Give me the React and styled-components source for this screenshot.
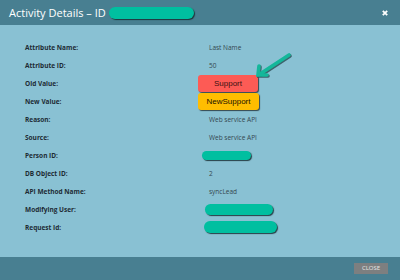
import React from "react";
import styled, { createGlobalStyle } from "styled-components";

const Global = createGlobalStyle`
  html, body {
    margin: 0;
    padding: 0;
    width: 400px;
    height: 280px;
    overflow: hidden;
    background: #89c1d3;
  }
`;

const Modal = styled.div`
  display: flex;
  flex-direction: column;
  width: 400px;
  height: 280px;
  background: #89c1d3;
  font-family: "Open Sans", "Liberation Sans", sans-serif;
`;

const Header = styled.div`
  display: flex;
  align-items: center;
  justify-content: space-between;
  height: 25px;
  padding: 0 12px 0 9px;
  background: #487f91;
  color: #ffffff;
`;

const Title = styled.div`
  display: flex;
  align-items: center;
  font-size: 11px;
`;

const Redacted = styled.span`
  display: inline-block;
  width: ${(p) => p.w}px;
  height: ${(p) => p.h}px;
  margin-left: ${(p) => p.shift || 0}px;
  border-radius: ${(p) => p.h / 2}px;
  background: #00bfa0;
  box-shadow: 1px 1px 1px rgba(20, 40, 45, 0.85);
`;

const CloseX = styled.svg`
  width: 6px;
  height: 6px;
  margin-top: 1px;
`;

const Content = styled.div`
  position: relative;
  flex: 1;
  padding: 13px 0 0 25px;
`;

const Row = styled.div`
  display: grid;
  grid-template-columns: 184px 1fr;
  align-items: center;
  height: 18px;
`;

const Label = styled.div`
  font-size: 6.5px;
  font-weight: 700;
  color: #1d2b33;
`;

const Value = styled.div`
  display: flex;
  align-items: center;
  font-size: 6.5px;
  color: #34474f;
`;

const Pill = styled.div`
  display: flex;
  align-items: center;
  justify-content: center;
  width: ${(p) => p.w}px;
  height: 17px;
  margin-left: -11px;
  border-radius: 3px;
  background: ${(p) => p.bg};
  box-shadow: 1px 1px 1px rgba(30, 40, 45, 0.8);
  font-family: "Liberation Sans", Arial, sans-serif;
  font-size: 8px;
  color: ${(p) => p.fg};
`;

const Arrow = styled.svg`
  position: absolute;
  left: 254px;
  top: 28px;
  width: 40px;
  height: 28px;
  overflow: visible;
`;

const Footer = styled.div`
  display: flex;
  align-items: center;
  justify-content: flex-end;
  height: 23px;
  padding-right: 12px;
  background: #487f91;
`;

const CloseButton = styled.button`
  width: 34px;
  height: 11px;
  padding: 0;
  border: none;
  background: #7d7f80;
  color: #e6e6e6;
  font-family: "Open Sans", "Liberation Sans", sans-serif;
  font-size: 6px;
  line-height: 11px;
`;

const rows = [
  ["Attribute Name:", "Last Name"],
  ["Attribute ID:", "50"],
  ["Old Value:", <Pill w={60} bg="#fd5b55" fg="#3a1212">Support</Pill>],
  ["New Value:", <Pill w={61} bg="#ffbd00" fg="#1a1200">NewSupport</Pill>],
  ["Reason:", "Web service API"],
  ["Source:", "Web service API"],
  ["Person ID:", <Redacted w={49} h={9} shift={-7} />],
  ["DB Object ID:", "2"],
  ["API Method Name:", "syncLead"],
  ["Modifying User:", <Redacted w={68} h={11} shift={-4} />],
  ["Request Id:", <Redacted w={73} h={12} shift={-5} />],
];

export default function App() {
  return (
    <Modal>
      <Global />
      <Header>
        <Title>
          Activity Details – ID&nbsp;
          <Redacted w={85} h={12} />
        </Title>
        <CloseX viewBox="0 0 6 6">
          <path d="M0.8 0.8 L5.2 5.2 M5.2 0.8 L0.8 5.2" stroke="#fff" strokeWidth="1.8" />
        </CloseX>
      </Header>
      <Content>
        {rows.map(([label, value]) => (
          <Row key={label}>
            <Label>{label}</Label>
            <Value>{value}</Value>
          </Row>
        ))}
        <Arrow viewBox="0 0 40 28">
          <g transform="translate(1 1)" stroke="#1d3a40" strokeOpacity="0.7" strokeWidth="3.6" strokeLinecap="round" fill="none">
            <path d="M35 2 L6 21" />
            <path d="M5 13 L4 22 L13 22" />
          </g>
          <g stroke="#14b79a" strokeWidth="3.6" strokeLinecap="round" fill="none">
            <path d="M35 2 L6 21" />
            <path d="M5 13 L4 22 L13 22" />
          </g>
        </Arrow>
      </Content>
      <Footer>
        <CloseButton>CLOSE</CloseButton>
      </Footer>
    </Modal>
  );
}
